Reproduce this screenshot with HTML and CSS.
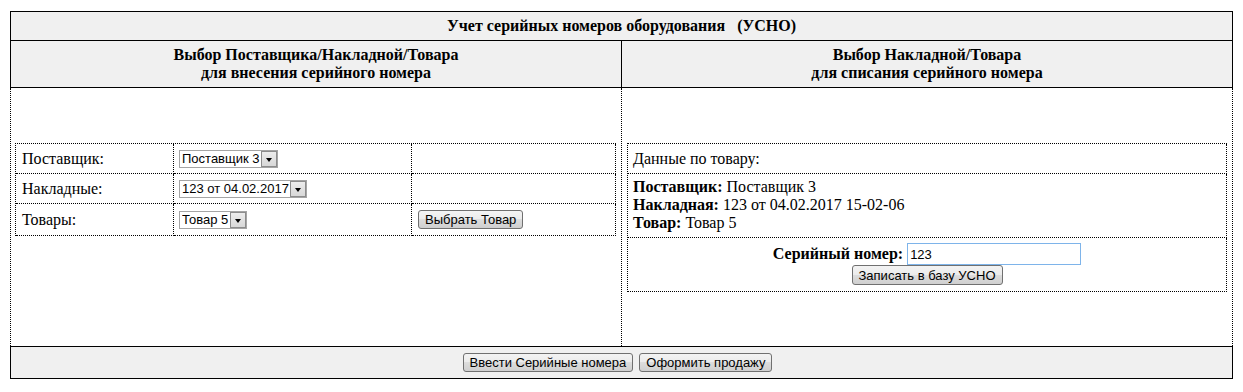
FILE: index.html
```html
<!DOCTYPE html>
<html lang="ru">
<head>
<meta charset="utf-8">
<title>УСНО</title>
<link rel="stylesheet" href="styles.css">
</head>
<body>
<div class="usno">
  <div class="title">Учет серийных номеров оборудования &nbsp; (УСНО)</div>
  <div class="heads">
    <div class="head">Выбор Поставщика/Накладной/Товара<br>для внесения серийного номера</div>
    <div class="head">Выбор Накладной/Товара<br>для списания серийного номера</div>
  </div>
  <div class="body">
    <div class="pane pane-left">
      <div class="form-grid">
        <div class="cell">Поставщик:</div>
        <div class="cell cell-ctl"><span class="sel"><select><option>Поставщик 3</option></select><span class="arr"><span class="tri"></span></span></span></div>
        <div class="cell"></div>
        <div class="cell">Накладные:</div>
        <div class="cell cell-ctl"><span class="sel"><select><option>123 от 04.02.2017</option></select><span class="arr"><span class="tri"></span></span></span></div>
        <div class="cell"></div>
        <div class="cell">Товары:</div>
        <div class="cell cell-ctl"><span class="sel"><select><option>Товар 5</option></select><span class="arr"><span class="tri"></span></span></span></div>
        <div class="cell"><button class="btn" type="button">Выбрать Товар</button></div>
      </div>
    </div>
    <div class="pane pane-right">
      <div class="info">
        <div class="info-row r1">Данные по товару:</div>
        <div class="info-row r2"><b>Поставщик:</b> Поставщик 3<br><b>Накладная:</b> 123 от 04.02.2017 15-02-06<br><b>Товар:</b> Товар 5</div>
        <div class="info-row r3">
          <div class="serial"><label for="sn">Серийный номер:</label><input id="sn" class="inp" type="text" value="123"></div>
          <button class="btn" type="button">Записать в базу УСНО</button>
        </div>
      </div>
    </div>
  </div>
  <div class="foot">
    <button class="btn" type="button">Ввести Серийные номера</button>
    <button class="btn" type="button">Оформить продажу</button>
  </div>
</div>
</body>
</html>
```

FILE: styles.css
```css
* { box-sizing: border-box; }

body {
  margin: 0;
  padding: 11px 10px 0;
  font-family: "Liberation Serif", "Times New Roman", serif;
  font-size: 16px;
  color: #000;
  background: #fff;
}

.title {
  height: 30px;
  border: 1px solid #000;
  background: #f0f0f0;
  display: flex;
  align-items: center;
  justify-content: center;
  font-weight: bold;
}

.heads {
  display: grid;
  grid-template-columns: 1fr 1fr;
  border-left: 1px solid #000;
  background: #f0f0f0;
}

.head {
  height: 47px;
  border-right: 1px solid #000;
  border-bottom: 1px solid #000;
  display: flex;
  align-items: center;
  justify-content: center;
  text-align: center;
  font-weight: bold;
  line-height: 18px;
}

.body {
  display: grid;
  grid-template-columns: 1fr 1fr;
  border-left: 1px dotted #000;
  height: 258px;
}

.pane {
  border-right: 1px dotted #000;
  padding-top: 55px;
}

.pane-left { padding-left: 4px; padding-right: 5px; }
.pane-right { padding-left: 5px; padding-right: 5px; }

.form-grid {
  display: grid;
  grid-template-columns: 158px 238px 1fr;
  grid-template-rows: 30px 30px 32px;
  border-top: 1px dotted #000;
  border-left: 1px dotted #000;
}

.cell {
  border-right: 1px dotted #000;
  border-bottom: 1px dotted #000;
  display: flex;
  align-items: center;
  padding-left: 6px;
}

.cell-ctl { padding-left: 5px; }

.sel {
  display: inline-flex;
  align-items: stretch;
  height: 18px;
  border: 1px solid #a5a5a5;
  background: #fff;
}

.sel select {
  -webkit-appearance: none;
  appearance: none;
  border: 0;
  outline: 0;
  margin: 0;
  padding: 0 1px 0 2px;
  height: 16px;
  font-family: "Liberation Sans", Arial, sans-serif;
  font-size: 13px;
  color: #000;
  background: #fff;
}

.arr {
  width: 16px;
  height: 16px;
  border: 1px solid #8c8c8c;
  background: linear-gradient(#ececec, #d8d8d8);
  display: flex;
  align-items: center;
  justify-content: center;
}

.tri {
  width: 0;
  height: 0;
  border-top: 4px solid #000;
  border-left: 3.5px solid transparent;
  border-right: 3.5px solid transparent;
  margin-top: 2px;
}

.btn {
  height: 19px;
  padding: 0 6px;
  margin: 0;
  border: 1px solid #707070;
  border-radius: 3px;
  background: linear-gradient(#f3f3f3, #ebebeb 50%, #dddddd 50%, #cfcfcf);
  font-family: "Liberation Sans", Arial, sans-serif;
  font-size: 13px;
  line-height: 15px;
  color: #000;
}

.info {
  border-top: 1px dotted #000;
  border-left: 1px dotted #000;
  display: flex;
  flex-direction: column;
}

.info-row {
  border-right: 1px dotted #000;
  border-bottom: 1px dotted #000;
}

.r1 {
  height: 30px;
  display: flex;
  align-items: center;
  padding-left: 5px;
}

.r2 {
  height: 64px;
  padding: 4px 5px 0;
  line-height: 18px;
}

.r3 {
  height: 54px;
  padding-top: 5px;
  display: flex;
  flex-direction: column;
  align-items: center;
}

.serial {
  display: flex;
  align-items: center;
  gap: 4px;
  height: 22px;
}

.serial label { font-weight: bold; }

.inp {
  width: 174px;
  height: 22px;
  margin: 0;
  padding: 0 2px;
  border: 1px solid #7eb4ea;
  font-family: "Liberation Sans", Arial, sans-serif;
  font-size: 13px;
  color: #000;
  outline: 0;
}

.r3 .btn { height: 20px; }

.foot {
  height: 33px;
  border: 1px solid #000;
  background: #f0f0f0;
  display: flex;
  align-items: center;
  justify-content: center;
  gap: 6px;
  padding-right: 8px;
}
```
